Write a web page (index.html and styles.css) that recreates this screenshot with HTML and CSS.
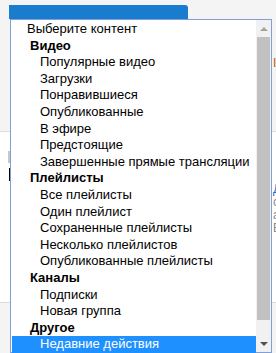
FILE: index.html
```html
<!DOCTYPE html>
<html>
<head>
    <meta http-equiv="Content-Type" content="text/html; charset=utf-8" />
    <title>Выберите контент</title>
    <link rel="stylesheet" href="styles.css">
</head>
<body>

<div class="page">
    <div class="page-top">
        <div class="page-tab"></div>
    </div>
    <div class="page-band page-band-gray">
        <div class="side-text side-orange">I</div>
    </div>
    <div class="page-band page-band-white">
        <div class="page-mark page-mark-gray"></div>
        <div class="page-mark page-mark-black"></div>
        <div class="side-text side-blue">Д</div>
        <div class="side-text side-gray">с</div>
        <div class="side-text side-gray">а</div>
        <div class="side-text side-gray">В</div>
    </div>
    <div class="page-band page-band-last"></div>
</div>

<!--выпадающий список-->
<div class="ui-select">
    <div class="ui-select-list">
        <div class="ui-select-option ui-select-first">Выберите контент</div>

        <div class="ui-select-group">Видео</div>
        <div class="ui-select-option">Популярные видео</div>
        <div class="ui-select-option">Загрузки</div>
        <div class="ui-select-option">Понравившиеся</div>
        <div class="ui-select-option">Опубликованные</div>
        <div class="ui-select-option">В эфире</div>
        <div class="ui-select-option">Предстоящие</div>
        <div class="ui-select-option">Завершенные прямые трансляции</div>

        <div class="ui-select-group">Плейлисты</div>
        <div class="ui-select-option">Все плейлисты</div>
        <div class="ui-select-option">Один плейлист</div>
        <div class="ui-select-option">Сохраненные плейлисты</div>
        <div class="ui-select-option">Несколько плейлистов</div>
        <div class="ui-select-option">Опубликованные плейлисты</div>

        <div class="ui-select-group">Каналы</div>
        <div class="ui-select-option">Подписки</div>
        <div class="ui-select-option">Новая группа</div>

        <div class="ui-select-group">Другое</div>
        <div class="ui-select-option ui-select-active">Недавние действия</div>
    </div>

    <div class="ui-scroll">
        <div class="ui-scroll-btn"><span class="ui-scroll-up"></span></div>
        <div class="ui-scroll-thumb"></div>
        <div class="ui-scroll-track"></div>
        <div class="ui-scroll-btn"><span class="ui-scroll-down"></span></div>
    </div>
</div>

</body>
</html>
```

FILE: styles.css
```css
body{
    padding: 0px;margin: 0px;
    font-family: "Liberation Sans", Arial, sans-serif;font-size: 13px;
    background: #f4f4f4;
    overflow: hidden;
}

/*страница под списком*/
.page{
    width: 276px;height: 353px;
    display: flex;flex-direction: column;
}
.page-top{
    height: 19px;
    padding-top: 5px;box-sizing: border-box;
}
.page-tab{
    width: 179px;height: 14px;margin-left: 9px;
    background: #1a7ccf;
    border-radius: 0px 3px 0px 0px;
}
.page-band{
    position: relative;
}
.page-band-gray{
    height: 112px;
    border-bottom: 1px solid #dcdcdc;
}
.page-band-white{
    height: 170px;
    background: #fff;
    border-bottom: 1px solid #dcdcdc;
}
.page-band-last{
    flex: 1;
}

.page-mark{
    margin-left: 8px;width: 2px;
}
.page-mark-gray{
    height: 12px;margin-top: 19px;background: #c8c8c8;
}
.page-mark-black{
    height: 13px;margin-top: 5px;margin-left: 9px;width: 1px;background: #000;
}

.side-text{
    margin-left: 273px;font-size: 12px;line-height: 12px;
}
.side-orange{color: #c05a10;padding-top: 38px;}
.side-blue{color: #2a6fc0;margin-top: 2px;}
.side-gray{color: #888;margin-top: 1px;}

/*выпадающий список*/
.ui-select{
    position: absolute;z-index: 9000;
    top: 19px;left: 10px;
    width: 260px;height: 332px;
    border: 1px solid #7f9fd6;
    background: #fff;
    display: flex;
}
.ui-select-list{
    flex: 1;
    padding-top: 1px;
}
.ui-select-option,
.ui-select-group{
    height: 16.6px;line-height: 16.6px;
    color: #000;
    white-space: nowrap;
}
.ui-select-option{
    padding-left: 29px;
}
.ui-select-first{
    padding-left: 16px;
}
.ui-select-group{
    padding-left: 19px;
    font-weight: bold;
}
.ui-select-active{
    margin-left: 1px;padding-left: 28px;
    background: #1e90ff;color: #fff;
}

/*полоса прокрутки*/
.ui-scroll{
    width: 15px;
    background: #f1f1f1;
    display: flex;flex-direction: column;
}
.ui-scroll-btn{
    height: 17px;
    display: flex;align-items: center;justify-content: center;
}
.ui-scroll-up{
    width: 0px;height: 0px;
    border-left: 4px solid transparent;border-right: 4px solid transparent;
    border-bottom: 4px solid #a3a3a3;
}
.ui-scroll-down{
    width: 0px;height: 0px;
    border-left: 4px solid transparent;border-right: 4px solid transparent;
    border-top: 4px solid #505050;
}
.ui-scroll-thumb{
    height: 283px;margin: 0px 1px;
    background: #c1c1c1;
}
.ui-scroll-track{
    flex: 1;
}
```
